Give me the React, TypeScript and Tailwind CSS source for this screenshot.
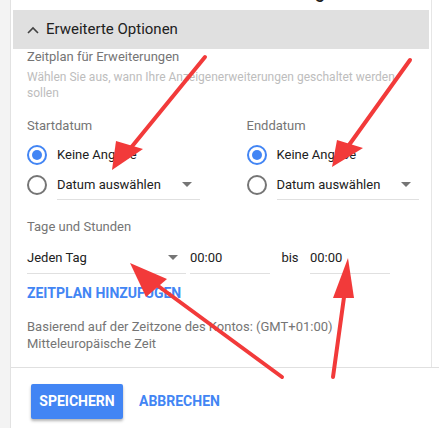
import React from "react";

const Radio = ({ checked }: { checked?: boolean }) => (
  <div
    className={`w-[20px] h-[20px] rounded-full border-2 flex items-center justify-center shrink-0 ${
      checked ? "border-[#4285f4]" : "border-[#757575]"
    }`}
  >
    {checked && <div className="w-[10px] h-[10px] rounded-full bg-[#4285f4]" />}
  </div>
);

const Caret = () => (
  <svg width="10" height="5" viewBox="0 0 10 5" className="shrink-0">
    <path d="M0 0 L10 0 L5 5 Z" fill="#757575" />
  </svg>
);

const DateGroup = ({ label, w }: { label: string; w: string }) => (
  <div className={`flex flex-col ${w}`}>
    <div className="text-[13px] leading-[16px] text-[#757575]">{label}</div>
    <div className="mt-[6px] h-[30px] flex items-center gap-[10px]">
      <Radio checked />
      <span className="text-[13px] text-[#212121]">Keine Angabe</span>
    </div>
    <div className="h-[30px] flex items-center gap-[10px]">
      <Radio />
      <div className="flex-1 h-full flex items-center justify-between pr-[8px] border-b border-[#e0e0e0]">
        <span className="text-[13px] text-[#212121]">Datum auswählen</span>
        <Caret />
      </div>
    </div>
  </div>
);

export default function App() {
  return (
    <div
      className="w-[439px] h-[428px] bg-white relative overflow-hidden flex"
      style={{ fontFamily: "Roboto, 'Liberation Sans', Arial, sans-serif" }}
    >
      <div className="w-[11px] shrink-0 bg-[#f3f3f3] border-r border-[#e2e2e2]" />
      <div className="flex-1 flex flex-col">
        <div className="flex">
          <div className="w-[421px] pl-[2px] pr-[2px] border-r border-[#e6e6e6] flex flex-col">
            <div className="h-[10px] overflow-hidden relative">
              <div className="absolute left-[150px] top-[-15px] h-[14px] leading-[14px] text-[18px] font-medium text-[#212121] whitespace-nowrap">
                Sitelink-Erweiterung
              </div>
            </div>
            <div className="h-[39px] bg-[#e0e0e0] flex items-center pl-[14px] gap-[7px]">
              <svg width="12" height="8" viewBox="0 0 12 8">
                <path d="M1 7 L6 2 L11 7" fill="none" stroke="#424242" strokeWidth="1.6" />
              </svg>
              <span className="text-[15px] text-[#212121]">Erweiterte Optionen</span>
            </div>
            <div className="pl-[14px] pr-[10px] flex flex-col h-[318px]">
              <div className="text-[13px] leading-[16px] text-[#757575]">
                Zeitplan für Erweiterungen
              </div>
              <div className="mt-[4px] text-[12px] leading-[16px] text-[#bdbdbd]">
                Wählen Sie aus, wann Ihre Anzeigenerweiterungen geschaltet werden sollen
              </div>
              <div className="mt-[17px] flex">
                <DateGroup label="Startdatum" w="w-[174px] mr-[47px]" />
                <DateGroup label="Enddatum" w="w-[174px]" />
              </div>
              <div className="mt-[19px] text-[13px] leading-[16px] text-[#757575]">
                Tage und Stunden
              </div>
              <div className="mt-[7px] h-[32px] flex items-stretch">
                <div className="w-[159px] flex items-center justify-between pr-[8px] border-b border-[#e0e0e0]">
                  <span className="text-[13px] text-[#212121]">Jeden Tag</span>
                  <Caret />
                </div>
                <div className="ml-[4px] w-[80px] flex items-center border-b border-[#e0e0e0]">
                  <span className="text-[13px] text-[#212121]">00:00</span>
                </div>
                <div className="w-[40px] flex items-center justify-center">
                  <span className="text-[13px] text-[#212121]">bis</span>
                </div>
                <div className="w-[80px] flex items-center border-b border-[#e0e0e0]">
                  <span className="text-[13px] text-[#212121]">00:00</span>
                </div>
              </div>
              <div className="mt-[11px] text-[14px] leading-[16px] font-bold text-[#4285f4]">
                ZEITPLAN HINZUFUGEN
              </div>
              <div className="mt-[17px] text-[13px] leading-[17px] text-[#757575]">
                Basierend auf der Zeitzone des Kontos: (GMT+01:00)
                <br />
                Mitteleuropäische Zeit
              </div>
            </div>
          </div>
        </div>
        <div className="border-t border-[#e0e0e0] flex-1 flex items-start pl-[20px] pt-[16px] gap-[16px]">
          <button className="w-[92px] h-[35px] bg-[#4285f4] text-white text-[14px] font-bold rounded-[2px] shadow-[0_2px_3px_rgba(0,0,0,0.3)]">
            SPEICHERN
          </button>
          <button className="h-[35px] text-[#4285f4] text-[14px] font-bold">ABBRECHEN</button>
        </div>
      </div>

      <svg
        className="absolute left-0 top-0 pointer-events-none"
        width="439"
        height="428"
        viewBox="0 0 439 428"
      >
        <g stroke="#f23a3a" strokeWidth="4" strokeLinecap="round" fill="#f23a3a">
          <line x1="205" y1="57" x2="125" y2="155" />
          <polygon points="112,170 116,141 143,149" stroke="none" />
          <line x1="410" y1="60" x2="344" y2="152" />
          <polygon points="332,167 337,140 363,148" stroke="none" />
          <line x1="282" y1="377" x2="150" y2="280" />
          <polygon points="130,263 167,279 146,297" stroke="none" />
          <line x1="333" y1="377" x2="345" y2="290" />
          <polygon points="348,258 333,298 354,298" stroke="none" />
        </g>
      </svg>
    </div>
  );
}
